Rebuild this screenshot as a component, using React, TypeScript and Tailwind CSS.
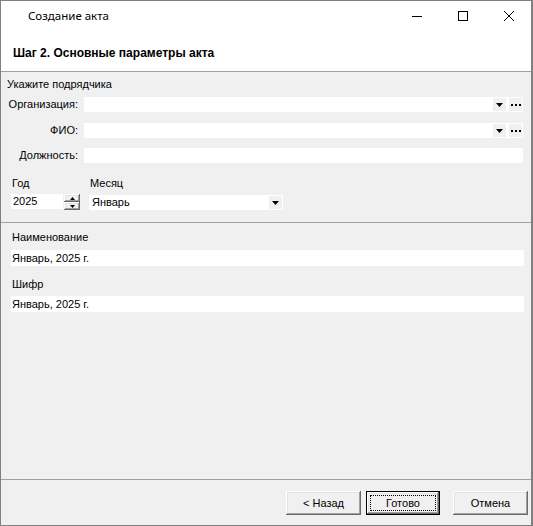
import React from "react";

const btn3d =
  "shadow-[inset_-1px_-1px_#696969,inset_1px_1px_#ffffff,inset_-2px_-2px_#a0a0a0,inset_2px_2px_#e3e3e3]";

function DownTri() {
  return (
    <svg width="7" height="4" viewBox="0 0 7 4" className="block">
      <path d="M0 0H7L3.5 4Z" fill="#000" />
    </svg>
  );
}

function ArrowBox() {
  return (
    <div className="w-[13px] h-[13px] bg-[#f0f0f0] flex items-center justify-center">
      <DownTri />
    </div>
  );
}

function Ellipsis() {
  return (
    <div className="w-[13px] h-[13px] bg-[#f0f0f0] flex items-center justify-center gap-[2px]">
      <div className="w-[2px] h-[2px] bg-black" />
      <div className="w-[2px] h-[2px] bg-black" />
      <div className="w-[2px] h-[2px] bg-black" />
    </div>
  );
}

function Row({ label, combo, mt }: { label: string; combo: boolean; mt: string }) {
  return (
    <div className={`flex h-[15px] items-center ${mt}`}>
      <div className="w-[77px] text-right leading-[15px]">{label}</div>
      <div className="ml-[6px] mr-[8px] flex-1 h-[15px] bg-white flex items-center justify-end pr-[1px] gap-[3px]">
        {combo && (
          <>
            <ArrowBox />
            <Ellipsis />
          </>
        )}
      </div>
    </div>
  );
}

function Button({ children, def }: { children: React.ReactNode; def?: boolean }) {
  if (def) {
    return (
      <div className="w-[74px] h-[24px] border border-black bg-[#f0f0f0]">
        <div className={`w-full h-full ${btn3d} p-[3px]`}>
          <div className="w-full h-full border border-dotted border-black flex items-center justify-center leading-none">
            {children}
          </div>
        </div>
      </div>
    );
  }
  return (
    <div className={`w-[75px] h-[24px] bg-[#f0f0f0] ${btn3d} flex items-center justify-center leading-none`}>
      {children}
    </div>
  );
}

function SpinBtn({ up }: { up?: boolean }) {
  return (
    <div className={`w-[16px] h-[8px] bg-[#f0f0f0] ${btn3d} flex items-center justify-center`}>
      <svg width="5" height="3" viewBox="0 0 5 3" className="block">
        {up ? <path d="M2.5 0L5 3H0Z" fill="#000" /> : <path d="M0 0H5L2.5 3Z" fill="#000" />}
      </svg>
    </div>
  );
}

export default function App() {
  return (
    <div className="w-[533px] h-[526px] border border-[#808080] border-r-2 bg-[#f0f0f0] flex flex-col text-[11px] text-black font-['Liberation_Sans',Arial,sans-serif]">
      {/* Title bar */}
      <div className="h-[30px] bg-white flex items-center shrink-0">
        <div className="pl-[27px] text-[11.5px] font-['Noto_Sans',sans-serif] flex-1">Создание акта</div>
        <div className="w-[46px] h-[30px] flex items-center justify-center">
          <div className="w-[10px] h-[1px] bg-black" />
        </div>
        <div className="w-[46px] h-[30px] flex items-center justify-center">
          <div className="w-[10px] h-[10px] border border-black" />
        </div>
        <div className="w-[45px] h-[30px] flex items-center justify-center">
          <svg width="10" height="10" viewBox="0 0 10 10">
            <path d="M0 0L10 10M10 0L0 10" stroke="#000" strokeWidth="1" />
          </svg>
        </div>
      </div>
      {/* Header */}
      <div className="h-[41px] bg-white border-b border-[#a0a0a0] flex items-center pl-[12px] pt-[3px] font-bold text-[12px] shrink-0">
        Шаг 2. Основные параметры акта
      </div>
      {/* Body */}
      <div className="flex-1 flex flex-col">
        <div className="pl-[6px] mt-[5px] h-[15px] leading-[15px]">Укажите подрядчика</div>
        <Row label="Организация:" combo mt="mt-[5px]" />
        <Row label="ФИО:" combo mt="mt-[11px]" />
        <Row label="Должность:" combo={false} mt="mt-[10px]" />

        <div className="flex mt-[13px] h-[15px] leading-[15px]">
          <div className="ml-[11px] w-[78px]">Год</div>
          <div>Месяц</div>
        </div>
        <div className="flex mt-[3px] items-start">
          <div className="ml-[10px] w-[52px] h-[15px] bg-white leading-[15px] pl-[2px]">2025</div>
          <div className="ml-[1px] flex flex-col">
            <SpinBtn up />
            <SpinBtn />
          </div>
          <div className="ml-[9px] mt-[1px] w-[194px] h-[15px] bg-white flex items-center justify-between pl-[3px] pr-[1px]">
            <span className="leading-[15px]">Январь</span>
            <ArrowBox />
          </div>
        </div>

        <div className="mt-[12px] h-px bg-[#a0a0a0]" />

        <div className="pl-[11px] mt-[7px] h-[15px] leading-[15px]">Наименование</div>
        <div className="ml-[10px] mr-[7px] mt-[5px] h-[16px] bg-white leading-[16px] pl-[1px]">Январь, 2025 г.</div>
        <div className="pl-[11px] mt-[11px] h-[15px] leading-[15px]">Шифр</div>
        <div className="ml-[10px] mr-[7px] mt-[4px] h-[16px] bg-white leading-[16px] pl-[1px]">Январь, 2025 г.</div>

        <div className="flex-1" />
        <div className="h-px bg-[#a0a0a0]" />
        <div className="h-[45px] flex items-start pt-[11px] pl-[285px]">
          <Button>&lt; Назад</Button>
          <div className="ml-[5px]">
            <Button def>Готово</Button>
          </div>
          <div className="ml-[13px]">
            <Button>Отмена</Button>
          </div>
        </div>
      </div>
    </div>
  );
}
